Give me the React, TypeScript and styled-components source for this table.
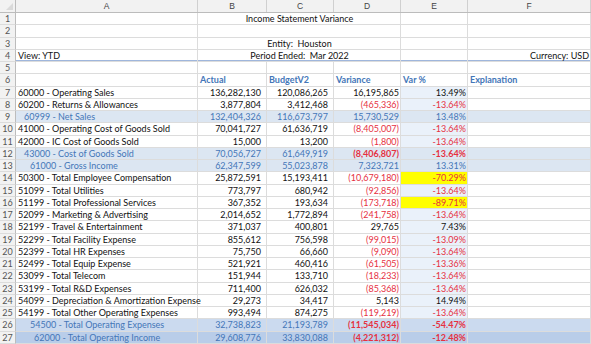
import React from "react";
import styled, { createGlobalStyle, css } from "styled-components";

const GlobalStyle = createGlobalStyle`
  html, body { margin: 0; padding: 0; background: #ffffff; overflow: hidden; }
  body { font-family: Lato, "Liberation Sans", sans-serif; font-size: 9px; color: #111; }
  * { box-sizing: border-box; }
`;

const COLS = "16px 182px 69px 67px 67px 67px 1fr";

const Sheet = styled.div`
  width: 591px;
  height: 344px;
  display: flex;
  flex-direction: column;
  overflow: hidden;
`;

type RowKind = "plain" | "sub" | "total1" | "total2";

const rowBg: Record<RowKind, string> = {
  plain: "#ffffff",
  sub: "#dce6f2",
  total1: "#cbdaef",
  total2: "#b9cde9",
};

const HeaderRow = styled.div`
  display: grid;
  grid-template-columns: ${COLS};
  height: 13px;
  flex: none;
  background: #f2f2f2;
  border-bottom: 1px solid #bcbcbc;
`;

const ColHead = styled.div`
  display: flex;
  align-items: center;
  justify-content: center;
  border-right: 1px solid #d0d0d0;
  color: #444;
  font-family: "Liberation Sans", sans-serif;
  font-size: 8.5px;
`;

const Corner = styled.div`
  position: relative;
  border-right: 1px solid #bcbcbc;
  &::after {
    content: "";
    position: absolute;
    right: 2px;
    bottom: 2px;
    border-left: 7px solid transparent;
    border-bottom: 7px solid #dadada;
  }
`;

const Row = styled.div<{ $kind: RowKind; $blueLine?: boolean }>`
  display: grid;
  grid-template-columns: ${COLS};
  height: 12.25px;
  flex: none;
  background: ${(p) => rowBg[p.$kind]};
  ${(p) =>
    p.$blueLine &&
    css`
      box-shadow: inset 0 -2px 0 #9fb6dc;
    `}
`;

const RowNum = styled.div`
  display: flex;
  align-items: center;
  justify-content: center;
  background: #f2f2f2;
  color: #555;
  border-right: 1px solid #bcbcbc;
  border-bottom: 1px solid #dcdcdc;
  font-size: 9px;
`;

const Cell = styled.div<{
  $align?: "left" | "right" | "center";
  $span?: number;
  $indent?: number;
  $color?: string;
  $bold?: boolean;
  $bg?: string;
  $pad?: number;
}>`
  display: flex;
  align-items: center;
  justify-content: ${(p) =>
    p.$align === "right" ? "flex-end" : p.$align === "center" ? "center" : "flex-start"};
  grid-column: span ${(p) => p.$span ?? 1};
  padding-left: ${(p) => 2 + (p.$indent ?? 0)}px;
  padding-right: ${(p) => p.$pad ?? 1}px;
  border-right: 1px solid #dcdcdc;
  border-bottom: 1px solid #dcdcdc;
  color: ${(p) => p.$color ?? "#111"};
  font-weight: ${(p) => (p.$bold ? 700 : 400)};
  background: ${(p) => p.$bg ?? "transparent"};
  white-space: nowrap;
  overflow: visible;
  line-height: 1;
`;

const BLUE = "#4476b8";
const RED = "#e6303f";
const PCT_BG = "#eaf1fa";
const YELLOW = "#ffff00";

type Line = {
  label: string;
  kind: RowKind;
  indent?: number;
  actual: string;
  budget: string;
  variance: string;
  pct: string;
  hi?: boolean;
};

const lines: Line[] = [
  { label: "60000 - Operating Sales", kind: "plain", actual: "136,282,130", budget: "120,086,265", variance: "16,195,865", pct: "13.49%" },
  { label: "60200 - Returns & Allowances", kind: "plain", actual: "3,877,804", budget: "3,412,468", variance: "(465,336)", pct: "-13.64%" },
  { label: "60999 - Net Sales", kind: "sub", indent: 6, actual: "132,404,326", budget: "116,673,797", variance: "15,730,529", pct: "13.48%" },
  { label: "41000 - Operating Cost of Goods Sold", kind: "plain", actual: "70,041,727", budget: "61,636,719", variance: "(8,405,007)", pct: "-13.64%" },
  { label: "42000 - IC Cost of Goods Sold", kind: "plain", actual: "15,000", budget: "13,200", variance: "(1,800)", pct: "-13.64%" },
  { label: "43000 - Cost of Goods Sold", kind: "sub", indent: 6, actual: "70,056,727", budget: "61,649,919", variance: "(8,406,807)", pct: "-13.64%" },
  { label: "61000 - Gross Income", kind: "sub", indent: 12, actual: "62,347,599", budget: "55,023,878", variance: "7,323,721", pct: "13.31%" },
  { label: "50300 - Total Employee Compensation", kind: "plain", actual: "25,872,591", budget: "15,193,411", variance: "(10,679,180)", pct: "-70.29%", hi: true },
  { label: "51099 - Total Utilities", kind: "plain", actual: "773,797", budget: "680,942", variance: "(92,856)", pct: "-13.64%" },
  { label: "51199 - Total Professional Services", kind: "plain", actual: "367,352", budget: "193,634", variance: "(173,718)", pct: "-89.71%", hi: true },
  { label: "52099 - Marketing & Advertising", kind: "plain", actual: "2,014,652", budget: "1,772,894", variance: "(241,758)", pct: "-13.64%" },
  { label: "52199 - Travel & Entertainment", kind: "plain", actual: "371,037", budget: "400,801", variance: "29,765", pct: "7.43%" },
  { label: "52299 - Total Facility Expense", kind: "plain", actual: "855,612", budget: "756,598", variance: "(99,015)", pct: "-13.09%" },
  { label: "52399 - Total HR Expenses", kind: "plain", actual: "75,750", budget: "66,660", variance: "(9,090)", pct: "-13.64%" },
  { label: "52499 - Total Equip Expense", kind: "plain", actual: "521,921", budget: "460,416", variance: "(61,505)", pct: "-13.36%" },
  { label: "53099 - Total Telecom", kind: "plain", actual: "151,944", budget: "133,710", variance: "(18,233)", pct: "-13.64%" },
  { label: "53199 - Total R&D Expenses", kind: "plain", actual: "711,400", budget: "626,032", variance: "(85,368)", pct: "-13.64%" },
  { label: "54099 - Depreciation & Amortization Expense", kind: "plain", actual: "29,273", budget: "34,417", variance: "5,143", pct: "14.94%" },
  { label: "54199 - Total Other Operating Expenses", kind: "plain", actual: "993,494", budget: "874,275", variance: "(119,219)", pct: "-13.64%" },
  { label: "54500 - Total Operating Expenses", kind: "total1", indent: 12, actual: "32,738,823", budget: "21,193,789", variance: "(11,545,034)", pct: "-54.47%" },
  { label: "62000 - Total Operating Income", kind: "total2", indent: 16, actual: "29,608,776", budget: "33,830,088", variance: "(4,221,312)", pct: "-12.48%" },
];

function DataRow({ n, line }: { n: number; line: Line }) {
  const isTotal = line.kind !== "plain";
  const textColor = isTotal ? BLUE : "#111";
  const negVar = line.variance.startsWith("(");
  const negPct = line.pct.startsWith("-");
  const varBold = negVar && isTotal;
  const pctBold = line.kind === "total1" || line.kind === "total2" || (line.kind === "sub" && negPct);
  const pctBg = line.hi ? YELLOW : line.kind === "plain" ? PCT_BG : undefined;
  return (
    <Row $kind={line.kind}>
      <RowNum>{n}</RowNum>
      <Cell $indent={line.indent} $color={textColor}>{line.label}</Cell>
      <Cell $align="right" $pad={5} $color={textColor}>{line.actual}</Cell>
      <Cell $align="right" $pad={5} $color={textColor}>{line.budget}</Cell>
      <Cell $align="right" $color={negVar ? RED : textColor} $bold={varBold}>{line.variance}</Cell>
      <Cell $align="right" $color={negPct ? RED : textColor} $bold={pctBold} $bg={pctBg}>{line.pct}</Cell>
      <Cell />
    </Row>
  );
}

export default function App() {
  return (
    <>
      <GlobalStyle />
      <Sheet>
        <HeaderRow>
          <Corner />
          {["A", "B", "C", "D", "E", "F"].map((c) => (
            <ColHead key={c}>{c}</ColHead>
          ))}
        </HeaderRow>

        <Row $kind="plain">
          <RowNum>1</RowNum>
          <Cell />
          <Cell $span={3} $align="center">Income Statement Variance</Cell>
          <Cell />
          <Cell />
        </Row>
        <Row $kind="plain">
          <RowNum>2</RowNum>
          <Cell />
          <Cell $span={3} />
          <Cell />
          <Cell />
        </Row>
        <Row $kind="plain">
          <RowNum>3</RowNum>
          <Cell />
          <Cell $span={3} $align="center">Entity:&nbsp; Houston</Cell>
          <Cell />
          <Cell />
        </Row>
        <Row $kind="plain" $blueLine>
          <RowNum>4</RowNum>
          <Cell>View: YTD</Cell>
          <Cell $span={3} $align="center">Period Ended:&nbsp; Mar 2022</Cell>
          <Cell />
          <Cell $align="right">Currency: USD</Cell>
        </Row>
        <Row $kind="plain">
          <RowNum>5</RowNum>
          <Cell />
          <Cell />
          <Cell />
          <Cell />
          <Cell />
          <Cell />
        </Row>
        <Row $kind="plain">
          <RowNum>6</RowNum>
          <Cell />
          <Cell $bold $color={BLUE}>Actual</Cell>
          <Cell $bold $color={BLUE}>BudgetV2</Cell>
          <Cell $bold $color={BLUE}>Variance</Cell>
          <Cell $bold $color={BLUE}>Var %</Cell>
          <Cell $bold $color={BLUE}>Explanation</Cell>
        </Row>

        {lines.map((l, i) => (
          <DataRow key={i} n={i + 7} line={l} />
        ))}
      </Sheet>
    </>
  );
}
